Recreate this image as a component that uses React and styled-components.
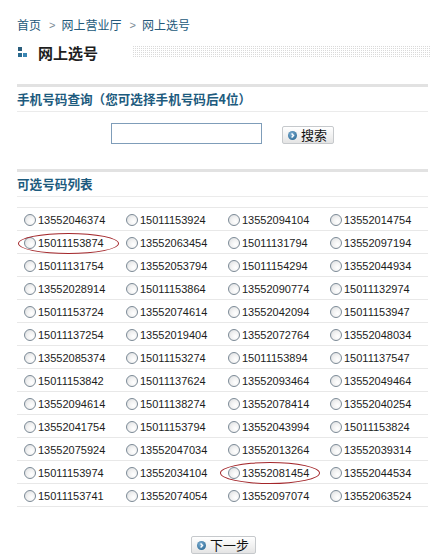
import React from "react";
import styled, { createGlobalStyle } from "styled-components";

const GlobalStyle = createGlobalStyle`
  html, body { margin: 0; padding: 0; background: #fff; }
  body {
    font-family: "Liberation Sans", "Noto Sans CJK SC", sans-serif;
    color: #222;
  }
  * { box-sizing: border-box; }
`;

const Page = styled.div`
  width: 433px;
  padding: 17px 5px 0 17px;
`;

const Breadcrumb = styled.div`
  display: flex;
  align-items: center;
  height: 16px;
  font-size: 12px;
  line-height: 16px;
  color: #23597a;
  font-family: "Noto Sans CJK SC", sans-serif;
`;

const Sep = styled.span`
  color: #7a8a96;
  margin: 0 6px 0 8px;
  font-family: "Liberation Sans", sans-serif;
  font-size: 11px;
`;

const TitleRow = styled.div`
  display: flex;
  align-items: center;
  height: 20px;
  margin-top: 9px;
`;

const TitleIcon = styled.svg`
  width: 10px;
  height: 11px;
  margin-left: 1px;
  flex: none;
`;

const TitleText = styled.div`
  margin-left: 10px;
  font-size: 15px;
  font-weight: bold;
  color: #1e1e1e;
  font-family: "Noto Sans CJK SC", sans-serif;
`;

const DotBar = styled.div`
  flex: 1;
  height: 12px;
  margin-left: 35px;
  margin-right: -2px;
  background-image:
    linear-gradient(90deg, transparent 50%, #fff 50%),
    linear-gradient(#dadada 50%, #fff 50%);
  background-size: 2px 2px, 2px 2px;
`;

const SectionHead = styled.div`
  margin-top: ${(p) => p.$mt}px;
  border-top: 3px solid #e2e2e2;
  border-bottom: 1px solid #ebebeb;
  height: 28px;
  padding-top: 2px;
  font-size: 12.6px;
  line-height: 20px;
  font-weight: bold;
  color: #1d5b7e;
  font-family: "Noto Sans CJK SC", sans-serif;
`;

const SearchRow = styled.div`
  display: flex;
  justify-content: center;
  align-items: flex-end;
  gap: 20px;
  margin-top: 11px;
`;

const SearchInput = styled.input`
  width: 151px;
  height: 21px;
  border: 1px solid #7f9db9;
  padding: 0 3px;
  outline: none;
  background: #fff;
`;

const Btn = styled.button`
  display: inline-flex;
  align-items: center;
  gap: 4px;
  height: 18px;
  padding: 0 ${(p) => p.$pr}px 0 5px;
  border: 1px solid #c6c9cc;
  border-radius: 2px;
  background: linear-gradient(#ffffff, #f0f0f0 60%, #e4e4e4);
  font-family: "Noto Sans CJK SC", sans-serif;
  font-size: 13px;
  line-height: 16px;
  color: #111;
  cursor: pointer;
`;

const BtnIcon = styled.svg`
  width: 9px;
  height: 9px;
  flex: none;
`;

const Table = styled.div`
  margin-top: 10px;
  border-top: 1px solid #e8e8e8;
`;

const Row = styled.div`
  display: grid;
  grid-template-columns: repeat(4, 102px);
  height: 23px;
  border-bottom: 1px solid #e8e8e8;
`;

const Cell = styled.label`
  position: relative;
  display: flex;
  align-items: center;
  padding: 1px 0 0 7px;
  gap: 2px;
  font-size: 11px;
  color: #1c1c1c;
`;

const Radio = styled.input`
  appearance: none;
  -webkit-appearance: none;
  margin: 0;
  width: 12px;
  height: 12px;
  border-radius: 50%;
  border: 1px solid #7c8a96;
  background: radial-gradient(circle at 65% 65%, #ffffff 0%, #f2f2f2 45%, #d6d9dc 100%);
  flex: none;
`;

const Mark = styled.span`
  position: absolute;
  left: ${(p) => p.$left}px;
  top: ${(p) => p.$top}px;
  width: ${(p) => p.$w}px;
  height: ${(p) => p.$h}px;
  border: 1px solid #a3262a;
  border-radius: 50%;
  pointer-events: none;
`;

const Footer = styled.div`
  display: flex;
  justify-content: center;
  margin-top: 29px;
  padding-left: 2px;
`;

const rows = [
  ["13552046374", "15011153924", "13552094104", "13552014754"],
  ["15011153874", "13552063454", "15011131794", "13552097194"],
  ["15011131754", "13552053794", "15011154294", "13552044934"],
  ["13552028914", "15011153864", "13552090774", "15011132974"],
  ["15011153724", "13552074614", "13552042094", "15011153947"],
  ["15011137254", "13552019404", "13552072764", "13552048034"],
  ["13552085374", "15011153274", "15011153894", "15011137547"],
  ["15011153842", "15011137624", "13552093464", "13552049464"],
  ["13552094614", "15011138274", "13552078414", "13552040254"],
  ["13552041754", "15011153794", "13552043994", "15011153824"],
  ["13552075924", "13552047034", "13552013264", "13552039314"],
  ["15011153974", "13552034104", "13552081454", "13552044534"],
  ["15011153741", "13552074054", "13552097074", "13552063524"],
];

const marks = {
  "1-0": { left: 1, top: 2, w: 101, h: 21 },
  "11-2": { left: -1, top: 1, w: 100, h: 22 },
};

const ArrowIcon = () => (
  <BtnIcon viewBox="0 0 9 9">
    <defs>
      <radialGradient id="bg" cx="40%" cy="35%" r="70%">
        <stop offset="0%" stopColor="#7fb0d4" />
        <stop offset="100%" stopColor="#2f6c97" />
      </radialGradient>
    </defs>
    <circle cx="4.5" cy="4.5" r="4.5" fill="url(#bg)" />
    <path d="M3.6 2.6 L5.5 4.5 L3.6 6.4" stroke="#fff" strokeWidth="1.4" fill="none" />
  </BtnIcon>
);

export default function App() {
  return (
    <Page>
      <GlobalStyle />
      <Breadcrumb>
        <span>首页</span>
        <Sep>&gt;</Sep>
        <span>网上营业厅</span>
        <Sep>&gt;</Sep>
        <span>网上选号</span>
      </Breadcrumb>

      <TitleRow>
        <TitleIcon viewBox="0 0 10 11">
          <rect x="0" y="0" width="4" height="4" fill="#2a5d7c" />
          <rect x="0" y="6" width="4" height="4" fill="#2a6a8f" />
          <rect x="5" y="6" width="4" height="4" fill="#3a86b4" />
        </TitleIcon>
        <TitleText>网上选号</TitleText>
        <DotBar />
      </TitleRow>

      <SectionHead $mt={22}>手机号码查询（您可选择手机号码后4位）</SectionHead>
      <SearchRow>
        <SearchInput type="text" />
        <Btn $pr={6}>
          <ArrowIcon />
          搜索
        </Btn>
      </SearchRow>

      <SectionHead $mt={25}>可选号码列表</SectionHead>
      <Table>
        {rows.map((r, i) => (
          <Row key={i}>
            {r.map((num, j) => {
              const m = marks[`${i}-${j}`];
              return (
                <Cell key={num}>
                  <Radio type="radio" name="num" value={num} />
                  {num}
                  {m && <Mark $left={m.left} $top={m.top} $w={m.w} $h={m.h} />}
                </Cell>
              );
            })}
          </Row>
        ))}
      </Table>

      <Footer>
        <Btn $pr={6}>
          <ArrowIcon />
          下一步
        </Btn>
      </Footer>
    </Page>
  );
}
